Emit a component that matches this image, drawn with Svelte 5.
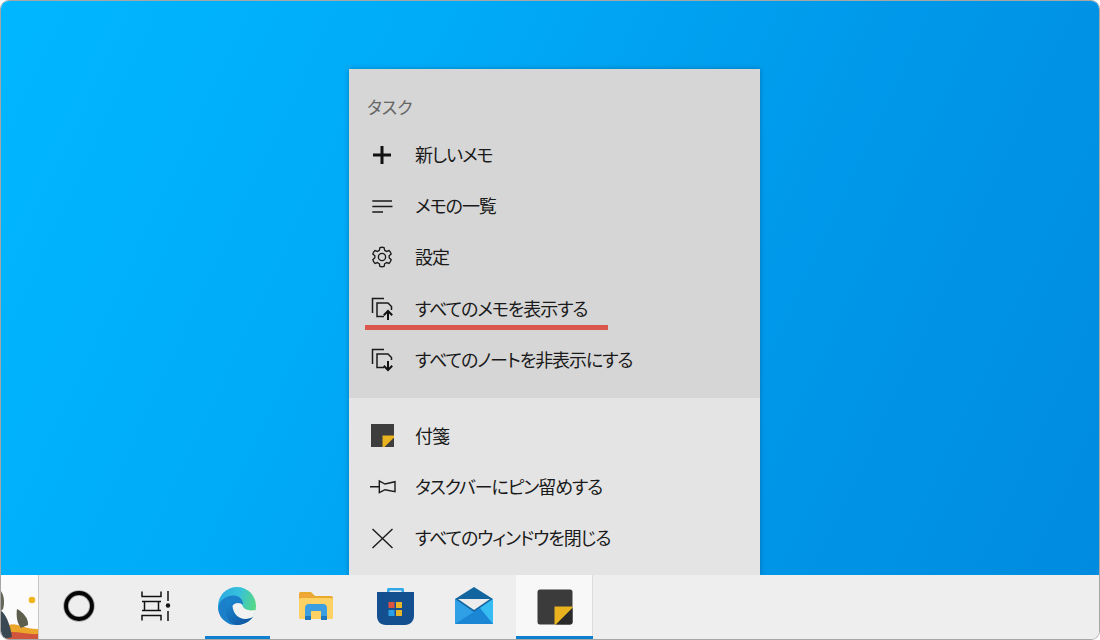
<script>
  const upper = [
    { label: '新しいメモ', icon: 'plus' },
    { label: 'メモの一覧', icon: 'list' },
    { label: '設定', icon: 'gear' },
    { label: 'すべてのメモを表示する', icon: 'show' },
    { label: 'すべてのノートを非表示にする', icon: 'hide' }
  ];
  const lower = [
    { label: '付箋', icon: 'sticky' },
    { label: 'タスクバーにピン留めする', icon: 'pin' },
    { label: 'すべてのウィンドウを閉じる', icon: 'close' }
  ];
</script>

{#snippet menuIcon(name)}
  <svg class="micon" viewBox="0 0 24 24" width="24" height="24" fill="none" stroke="#1a1a1a" stroke-width="1.3">
    {#if name === 'plus'}
      <path d="M11 3v18M2 12h18" stroke-width="3" stroke="#111" />
    {:else if name === 'list'}
      <path d="M1.300 7H21M1.300 12.500H21.500M1.300 18H12" stroke-width="1.400" />
    {:else if name === 'gear'}
      <g transform="translate(11 12) scale(0.95)">
        <circle r="3.800" stroke-width="1.400" />
        <path stroke-width="1.400" d="M-2.200 -10.500C-1 -11 1 -11 2.200 -10.500L2.800 -7.700C3.500 -7.400 4.100 -7.100 4.700 -6.600L7.400 -7.500C8.300 -6.700 9.400 -4.900 9.700 -3.800L7.500 -1.900C7.600 -1.200 7.600 -0.500 7.500 0.200L9.700 2.100C9.400 3.300 8.400 5.100 7.500 6L4.800 5.100C4.200 5.600 3.500 6.100 2.800 6.400L2.200 9.200C1 9.600 -1 9.600 -2.200 9.200L-2.800 6.400C-3.500 6.100 -4.200 5.600 -4.800 5.100L-7.500 6C-8.400 5.100 -9.400 3.300 -9.700 2.100L-7.500 0.200C-7.600 -0.500 -7.600 -1.200 -7.500 -1.900L-9.700 -3.800C-9.400 -4.900 -8.300 -6.700 -7.400 -7.500L-4.700 -6.600C-4.100 -7.100 -3.500 -7.400 -2.800 -7.700z" transform="translate(0 0.700)" />
      </g>
    {:else if name === 'show'}
      <path d="M1.500 16V1.500H13" stroke-width="1.500" />
      <path d="M13 19.500H6V6H17L20.500 9.500V13" stroke-width="1.500" />
      <path d="M17 23V14M12.800 18.200L17 14l4.200 4.200" stroke-width="2" stroke="#111" />
    {:else if name === 'hide'}
      <path d="M1.500 16V1.500H13" stroke-width="1.500" />
      <path d="M13 19.500H6V6H17L20.500 9.500V12" stroke-width="1.500" />
      <path d="M17 13V22M12.800 17.800L17 22l4.200-4.200" stroke-width="2" stroke="#111" />
    {:else if name === 'sticky'}
      <rect x="0" y="0" width="23" height="23" fill="#3d3d3d" stroke="none" />
      <path d="M11.500 11.500H23V13.500L13.500 23H11.500z" fill="#e8b31f" stroke="none" />
    {:else if name === 'pin'}
      <path d="M-1 11.700H8.300M8.300 6V17.700L14 14.700L24 16.700V6.700L14 9L8.300 6z" stroke-width="1.400" />
    {:else if name === 'close'}
      <path d="M1.500 3L21.500 22M21.500 3L1.500 22" stroke-width="1.400" />
    {/if}
  </svg>
{/snippet}

<div class="screen">
  <div class="desktop">
    <section class="menu">
      <div class="panel upper">
        <div class="heading">タスク</div>
        {#each upper as item}
          <div class="row">
            {@render menuIcon(item.icon)}
            <span>{item.label}</span>
            {#if item.icon === 'show'}<i class="mark"></i>{/if}
          </div>
        {/each}
      </div>
      <div class="panel lower">
        {#each lower as item}
          <div class="row">
            {@render menuIcon(item.icon)}
            <span>{item.label}</span>
          </div>
        {/each}
      </div>
    </section>
  </div>

  <footer class="taskbar">
    <div class="thumb">
      <svg viewBox="0 0 38 65" width="38" height="65">
        <circle cx="31" cy="25" r="3.300" fill="#f0b41c" />
        <path d="M0 16C3 20 4 28 2 34L0 36z" fill="#66665a" />
        <path d="M8 50C16 47 24 55 38 54V65H6z" fill="#eba52a" />
        <path d="M5 58C14 55 24 60 38 59V65H4z" fill="#d1543d" />
        <path d="M16 34C22 37 28 44 27 50L20 53C16 48 15 41 16 34z" fill="#5e5e4e" />
        <path d="M0 36C4 38 9 48 11 62L0 65z" fill="#3a4854" />
      </svg>
    </div>
    <div class="apps">
      <div class="tile">
        <svg viewBox="0 0 32 32" width="32" height="32">
          <circle cx="16" cy="16" r="13" fill="none" stroke="#a0a0a0" stroke-width="5.500" />
          <circle cx="16" cy="16" r="13" fill="none" stroke="#050505" stroke-width="3.800" />
        </svg>
      </div>
      <div class="tile shift">
        <svg viewBox="0 0 32 32" width="32" height="32" fill="none" stroke="#111" stroke-width="1.500">
          <path d="M2 1.500V6.500H21V1.500M2 30.500V25.500H21V30.500" />
          <path d="M4.500 11.500H18.500V20.500H4.500zM2 11.500H21M2 20.500H21" />
          <path d="M28 1v10M28 21v10" />
          <circle cx="28" cy="15.500" r="2.200" fill="#111" stroke="none" />
        </svg>
      </div>
      <div class="tile on">
        <svg viewBox="0 0 40 40" width="40" height="40">
          <defs>
            <linearGradient id="eg1" x1="0" y1="0" x2="1" y2="0.300">
              <stop offset="0" stop-color="#2aa6e2" /><stop offset="0.550" stop-color="#36c0dc" /><stop offset="1" stop-color="#56d78a" />
            </linearGradient>
            <linearGradient id="eg2" x1="0" y1="0" x2="1" y2="1">
              <stop offset="0" stop-color="#1a8bd2" /><stop offset="1" stop-color="#0f4d9c" />
            </linearGradient>
          </defs>
          <circle cx="20" cy="20" r="19" fill="url(#eg1)" />
          <path d="M1.200 22C2 14 10 9 17 9.500C23 10 26 14 26 18L15 24L24 38C20 39.500 14 39.500 10 36.500C4 33 1.500 28 1.200 22z" fill="#1b80c9" />
          <path d="M9 15C13 13 20 14 23 18L17 23C17 30 24 35 36 31C33 35 28 38.500 21 39C13 39 6 30 9 15z" fill="url(#eg2)" />
          <path d="M15.500 20C17 16.500 24 16 25.500 19.500C26.500 23 31 25.500 38.600 24C38 27 36.500 30 35 31.500C26 35.500 16.500 31 15.500 20z" fill="#f2f2f2" />
        </svg>
      </div>
      <div class="tile">
        <svg viewBox="0 0 36 30" width="36" height="30">
          <path d="M1 3C1 1.500 2 1 3 1H13L17 5H33C34.500 5 35 6 35 7V12H1z" fill="#e9a92b" />
          <path d="M1 3H13L16 6H1z" fill="#f0a63a" />
          <rect x="1" y="7" width="34" height="21" rx="1.500" fill="#fdd163" />
          <path d="M7 29V17C7 14.500 8.500 13 11 13H25C27.500 13 29 14.500 29 17V29H23V20H13V29z" fill="#3a9ee0" />
          <path d="M7 25H13V29H7zM23 25H29V29H23z" fill="#1e77bd" />
        </svg>
      </div>
      <div class="tile">
        <svg viewBox="0 0 40 40" width="40" height="40">
          <path d="M12 7V3.500C12 2.500 13 2 14 2H27C28 2 29 2.500 29 3.500V7H26.500V4.500H14.500V7z" fill="#30a8e8" />
          <path d="M2 6H39V30C39 35 35 39 30 39H11C5 39 2 35 2 30z" fill="#14508f" />
          <rect x="13.500" y="16" width="6" height="6" fill="#dc5340" />
          <rect x="21" y="16" width="6" height="6" fill="#e8b42a" />
          <rect x="13.500" y="24" width="6" height="6" fill="#2aa0e8" />
          <rect x="21" y="24" width="6" height="6" fill="#e8b42a" />
        </svg>
      </div>
      <div class="tile">
        <svg viewBox="0 0 40 38" width="40" height="38">
          <path d="M1 12L20 0L39 12V37H1z" fill="#12659f" />
          <path d="M4 12H36L20 23z" fill="#ececec" />
          <path d="M1 12L20 25L39 12V37H1z" fill="#2f9fe6" />
          <path d="M39 12V37H20L26 21z" fill="#35bcf2" />
          <path d="M1 37L26 21L39 37z" fill="#1a86d4" />
        </svg>
      </div>
      <div class="tile active">
        <svg viewBox="0 0 36 36" width="36" height="36">
          <rect x="0.500" y="0.500" width="35" height="35" rx="2.500" fill="#3b3b3b" />
          <path d="M17.500 17.500H35.500V19L19 35.500H17.500z" fill="#e8b31f" />
          <path d="M35.500 19V33C35.500 34.500 34.500 35.500 33 35.500H19z" fill="#2a2a2a" />
        </svg>
        <i class="strip"></i>
      </div>
    </div>
  </footer>
</div>

<style>
  :global(body) {
    margin: 0;
    background: #fff;
  }
  .screen {
    width: 1100px;
    height: 640px;
    box-sizing: border-box;
    border: 1px solid #a6a6a6;
    border-radius: 9px;
    overflow: hidden;
    display: flex;
    flex-direction: column;
    font-family: "Noto Sans CJK JP", "Noto Sans", sans-serif;
    font-feature-settings: "palt";
    color: #1a1a1a;
  }
  .desktop {
    flex: 1;
    min-height: 0;
    padding: 68px 0 0 348px;
    background: linear-gradient(115deg, #00b7ff 0%, #00aaf6 35%, #0099ea 65%, #008bdf 100%);
  }
  .menu {
    width: 411px;
    box-shadow: 0 0 5px rgba(0, 40, 90, 0.35);
  }
  .panel {
    padding: 12.4px 0;
  }
  .upper {
    background: #d6d6d6;
    padding-top: 0;
  }
  .lower {
    background: #e4e4e4;
  }
  .heading {
    height: 60.5px;
    padding: 25px 0 0 18px;
    box-sizing: border-box;
    font-size: 17px;
    line-height: 26px;
    color: #666;
  }
  .row {
    position: relative;
    height: 51.2px;
    display: flex;
    align-items: center;
    font-size: 18px;
    letter-spacing: -1.1px;
    padding-left: 22px;
    white-space: nowrap;
  }
  .row span {
    margin-left: 20px;
    padding-bottom: 2px;
  }
  .micon {
    overflow: visible;
  }
  .mark {
    position: absolute;
    left: 16px;
    top: 42px;
    width: 243px;
    height: 5px;
    background: #d9574c;
  }
  .taskbar {
    height: 64px;
    flex: none;
    display: flex;
    background: #eeeeee;
    border-bottom: 1px solid #a6a6a6;
    margin-bottom: -1px;
  }
  .thumb {
    width: 37px;
    height: 64px;
    background: #fbfbfb;
    border-right: 1px solid #c8c8c8;
    overflow: hidden;
    flex: none;
  }
  .apps {
    display: flex;
  }
  .tile {
    position: relative;
    width: 79px;
    display: flex;
    align-items: center;
    justify-content: center;
  }
  .tile svg {
    margin-bottom: 3px;
  }
  .shift svg {
    margin-right: 3px;
  }
  .on::after {
    content: "";
    position: absolute;
    left: 8px;
    right: 6px;
    bottom: 0;
    height: 3px;
    background: #0f7fd0;
  }
  .active {
    width: 72px;
    margin-left: 3px;
    background: #f8f8f8;
  }
  .active svg {
    margin-left: 5px;
    margin-bottom: 1px;
  }
  .active::after {
    content: "";
    position: absolute;
    left: 0;
    right: -5px;
    bottom: 0;
    height: 3px;
    background: #0f7fd0;
  }
  .strip {
    position: absolute;
    left: 72px;
    top: 0;
    bottom: 3px;
    width: 4px;
    background: #f8f8f8;
    border-right: 1px solid #dcdcdc;
  }
</style>
